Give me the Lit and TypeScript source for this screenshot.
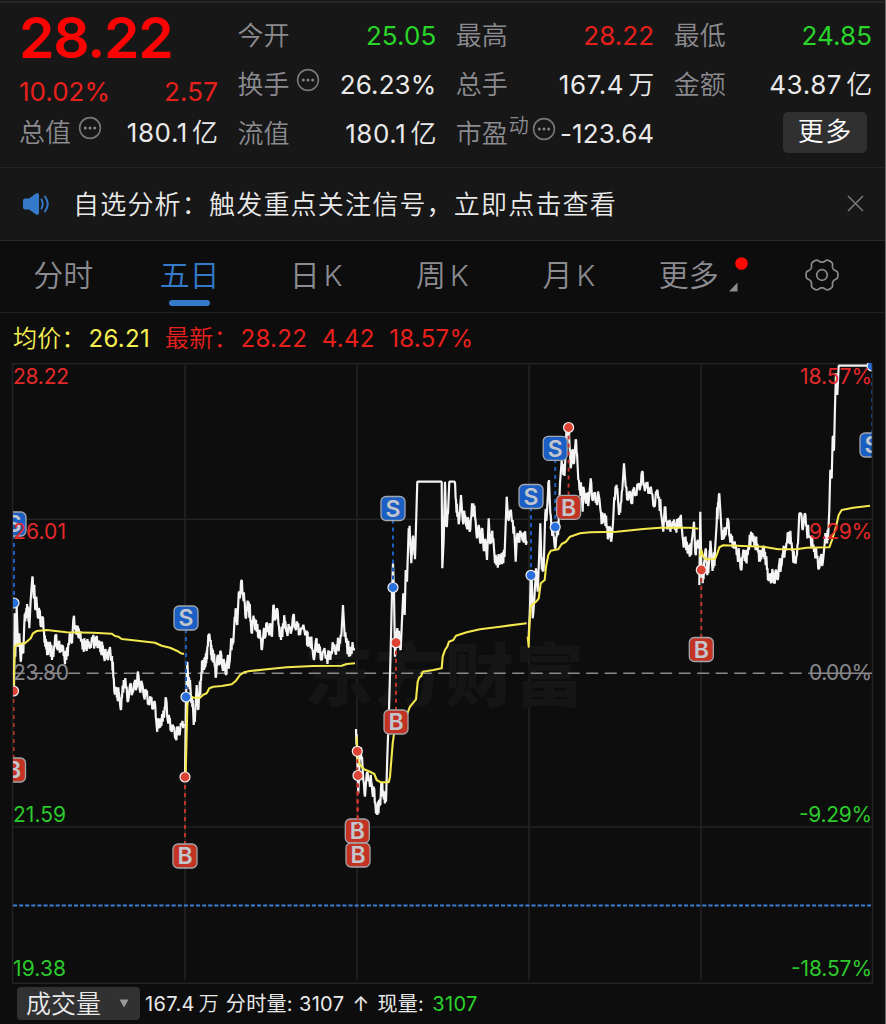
import { LitElement, html, svg, css } from "lit";
import { customElement } from "lit/decorators.js";

type Pt = [number, number];

/* Each trading session: traced in 1/3 px units from the session's own origin. */
interface Session {
  ox: number;
  oy: number;
  price: string;
  avg: string;
}

const SESSIONS: Session[] = [
  {
    ox: 0,
    oy: 500,
    price:
      "42,572 44,340 46,470 50,320 54,440 58,400 62,485 66,430 70,460 73,370 77,335 80,345 84,320 88,385 92,300 97,232 100,260 104,290 106,330 109,290 113,350 118,330 123,380 128,350 132,395 136,440 140,425 144,465 150,425 156,480 162,440 167,405 172,445 176,430 181,450 187,440 193,465 199,480 205,430 211,405 216,430 220,360 226,375 232,405 236,385 243,425 250,440 254,430 258,440 264,430 270,440 278,415 284,435 289,412 294,440 297,425 303,455 307,435 312,470 318,460 323,475 327,455 336,468 340,530 344,580 348,565 352,590 356,575 362,628 366,595 371,540 378,560 384,605 390,555 397,580 404,545 409,565 414,515 419,570 426,550 432,590 438,575 446,610 452,595 459,625 464,605 469,665 476,685 482,655 488,665 494,620 498,595 503,660 508,655 513,690 520,680 527,715 533,685 536,700 545,675 552,672",
    avg: "41,560 44,440 55,432 75,430 92,415 99,400 110,393 140,390 200,397 280,398 335,401 345,408 355,410 365,417 400,421 465,428 485,437 510,443 530,452 545,461 552,461",
  },
  {
    ox: 180,
    oy: 560,
    price:
      "15,650 18,410 22,305 26,380 30,360 34,430 38,420 41,495 46,450 50,375 54,450 58,410 62,360 65,340 68,300 72,330 75,290 79,310 82,260 86,225 92,240 95,300 99,270 104,320 108,350 112,290 118,310 122,275 127,320 133,310 138,345 142,300 148,310 152,265 156,240 160,250 164,170 168,160 172,195 176,100 180,110 184,62 189,100 193,120 197,175 201,150 206,125 211,180 215,220 219,180 223,175 230,215 236,210 241,235 246,268 251,210 255,230 260,190 266,215 272,200 276,230 280,135 285,180 291,145 297,200 303,240 309,190 314,182 320,215 328,205 334,215 340,165 345,200 353,195 358,220 365,208 380,212 384,260 390,230 396,265 402,300 408,240 413,270 418,260 424,300 430,275 440,285 447,298 453,275 460,255 466,275 472,262 478,245 484,230 489,135 494,230 500,235 507,290 512,260 520,268 525,268",
    avg: "17,640 22,440 25,405 40,413 60,413 70,404 80,400 88,385 100,380 125,378 155,373 168,362 180,345 192,337 210,333 260,328 320,322 400,318 485,317 500,312 525,310",
  },
  {
    ox: 340,
    oy: 460,
    price:
      "48,807 51,870 55,1000 60,870 66,890 70,960 75,1010 80,940 88,960 94,965 98,1005 101,985 106,1030 112,1065 117,1020 121,1035 124,965 128,1010 133,1000 138,1025 142,890 147,750 152,570 156,400 159,310 162,400 165,590 170,520 175,515 178,545 182,570 186,480 190,400 194,465 197,330 201,365 206,205 210,230 214,310 218,235 222,240 225,298 228,200 232,65 305,65 307,325 311,240 315,65 319,200 324,160 328,65 344,65 348,120 352,170 358,180 363,105 368,180 374,165 380,200 385,180 389,215 394,170 400,130 405,170 411,235 416,195 421,250 427,205 431,270 436,240 441,300 446,175 450,250 455,225 460,235 465,310 471,290 478,315 484,280 490,310 495,250 500,110 505,180 510,155 518,180 524,240 527,305 531,225 536,240 542,220 550,240 553,225 560,243",
    avg: "50,830 53,900 58,912 72,928 90,935 103,942 110,960 122,967 146,967 150,950 158,850 163,815 180,800 195,785 204,755 210,740 218,730 228,718 233,665 238,652 244,648 248,635 280,630 305,625 308,590 315,570 322,560 327,545 340,540 348,527 380,517 420,508 480,500 560,490",
  },
  {
    ox: 510,
    oy: 400,
    price:
      "56,710 60,620 62,530 66,560 68,655 73,600 78,505 83,575 87,480 91,370 94,470 98,515 102,470 106,340 110,350 114,280 117,240 121,340 125,380 130,400 135,445 140,410 146,360 150,250 155,180 160,225 165,200 169,100 174,85 178,120 182,205 187,150 192,190 197,118 201,160 205,240 210,270 214,265 218,335 220,260 226,300 231,290 236,305 242,235 247,300 253,280 259,305 266,285 273,340 278,370 284,340 290,385 295,410 299,380 304,425 309,370 313,290 318,270 322,265 327,345 332,310 337,270 342,190 347,260 353,300 359,275 365,310 370,270 377,280 384,258 391,262 396,215 402,255 410,265 417,262 425,280 432,320 440,275 447,290 453,340 460,395 464,320 470,365 477,385 483,370 490,378 497,370 503,385 510,350 514,375 519,420 525,435 530,425 539,470 545,425 552,365 556,460 561,430 568,435",
    avg: "53,710 56,740 58,680 62,620 70,612 80,603 86,595 92,550 104,540 108,500 115,465 122,452 145,448 155,432 168,425 180,410 210,400 240,397 320,395 400,387 450,383 540,383 565,386",
  },
  {
    ox: 690,
    oy: 350,
    price:
      "28,705 31,485 34,640 38,700 42,640 47,595 50,640 55,670 59,600 62,580 66,640 70,655 75,600 80,520 84,460 88,430 92,500 96,570 100,540 104,560 109,530 114,510 119,560 124,570 130,580 136,590 142,610 148,620 153,660 158,620 163,600 167,635 171,605 177,600 183,545 189,575 195,570 200,590 206,600 210,635 215,600 220,610 225,605 231,660 235,685 240,680 244,690 248,665 253,700 258,660 263,690 268,640 273,650 279,610 285,600 291,580 297,545 303,580 308,600 313,640 319,620 324,580 328,490 333,490 338,540 344,490 350,530 356,560 362,560 368,590 374,600 380,620 387,655 392,620 398,640 404,580 410,550 414,570 418,480 421,360 425,385 428,260 432,300 435,170 438,70 442,135 446,47 538,47",
    avg: "30,620 34,600 40,620 48,628 75,627 82,610 88,592 100,586 160,588 220,590 265,598 320,598 350,593 418,592 426,570 438,530 446,495 455,480 490,473 540,467",
  },
];

const parse = (s: Session, src: string): Pt[] =>
  src.split(" ").map((p) => {
    const [x, y] = p.split(",").map(Number);
    return [s.ox + x / 3, s.oy + y / 3] as Pt;
  });

const join = (pts: Pt[]) => pts.map(([x, y]) => `${x.toFixed(1)},${y.toFixed(1)}`).join(" ");

const ticks = (pts: Pt[]): Pt[] => {
  const out: Pt[] = [];
  pts.forEach((p, i) => {
    const prev = pts[i - 1];
    if (prev && prev[1] !== p[1] && Math.abs(prev[1] - p[1]) < 22) {
      const k = (i % 2 ? 1 : -1) * (3.6 + ((i * 7) % 5) * 0.8);
      out.push([prev[0] + (p[0] - prev[0]) * 0.35, (prev[1] + p[1]) / 2 + k]);
      out.push([prev[0] + (p[0] - prev[0]) * 0.7, (prev[1] + p[1]) / 2 - k]);
    }
    out.push(p);
  });
  return out;
};

interface Mark {
  k: "S" | "B";
  x: number;
  dot: number;
  tag: number;
}

const MARKS: Mark[] = [
  { k: "S", x: 14, dot: 603, tag: 524 },
  { k: "B", x: 13.5, dot: 691, tag: 770 },
  { k: "S", x: 186, dot: 697, tag: 618 },
  { k: "B", x: 185, dot: 777, tag: 856 },
  { k: "B", x: 357.3, dot: 751.3, tag: 831 },
  { k: "B", x: 358, dot: 775.5, tag: 855 },
  { k: "S", x: 393, dot: 587.5, tag: 508.5 },
  { k: "B", x: 396, dot: 642.7, tag: 722 },
  { k: "S", x: 531, dot: 575.3, tag: 496.5 },
  { k: "S", x: 555.2, dot: 527, tag: 448.3 },
  { k: "B", x: 568.6, dot: 427.5, tag: 507.3 },
  { k: "B", x: 701.3, dot: 570, tag: 649.5 },
  { k: "S", x: 872, dot: 366, tag: 445 },
];

const more = svg`<circle cx="12" cy="12" r="10.4" fill="none" stroke="#77777a" stroke-width="1.6"/>
  <g fill="#85858a"><circle cx="7.3" cy="12" r="1.5"/><circle cx="12" cy="12" r="1.5"/><circle cx="16.7" cy="12" r="1.5"/></g>`;

const gearPath = (() => {
  const pts: string[] = [];
  for (let i = 0; i <= 144; i++) {
    const a = (i / 144) * Math.PI * 2;
    const c = Math.cos(6 * a) + 0.25;
    const r = 14.3 + 1.7 * Math.tanh(c * 1.7);
    pts.push(`${(17 + r * Math.cos(a)).toFixed(2)} ${(17 + r * Math.sin(a)).toFixed(2)}`);
  }
  return `M${pts.join("L")}Z`;
})();

@customElement("app-root")
export class AppRoot extends LitElement {
  static styles = css`
    :host {
      display: block;
      box-sizing: border-box;
      width: 886px;
      height: 1024px;
      overflow: hidden;
      background: #0d0d0d;
      border-right: 1px solid #6a6a6a;
      font-family: Inter, "Noto Sans CJK SC", sans-serif;
      color: #e9e9e9;
      white-space: nowrap;
    }
    svg { display: block; flex: none; }
    .quote {
      box-sizing: border-box;
      height: 168px;
      padding: 11px 12.5px 0 19px;
      border-bottom: 1px solid #242426;
      background: linear-gradient(#1a1a1b 0 1px, #262628 1px 3px, #171717 3px);
      display: grid;
      grid-template-columns: 199px 199px 198.5px 198.5px;
      column-gap: 19.4px;
    }
    .col { display: grid; grid-template-rows: 49px 49px 49px; }
    .first { grid-template-rows: 56px 49px 34px; }
    .cell {
      display: flex;
      align-items: center;
      justify-content: space-between;
      font-size: 26px;
      line-height: 48px;
    }
    .label { color: #8b8b90; display: flex; font-weight: 350; }
    .label svg { margin: 7px 0 0 7px; }
    .val { letter-spacing: 0.1px; }
    .val:has(.han) { letter-spacing: 0.6px; }
    .han { font-weight: 350; margin-left: 4px; letter-spacing: 0; }
    .pe .label svg { margin-left: 3px; }
    .up { color: #e8201c; }
    .down { color: #2ad52a; }
    .price {
      color: #fb0504;
      font-size: 57px;
      font-weight: 560;
      line-height: 54px;
      letter-spacing: -1.3px;
    }
    .sup { font-size: 20px; line-height: 32px; margin-left: 1px; }
    .btn {
      box-sizing: border-box;
      width: 84px;
      height: 41px;
      margin: -2px 5px 0 auto;
      border-radius: 5px;
      background: #303031;
      color: #fff;
      font-weight: 350;
      line-height: 40px;
      text-align: center;
      letter-spacing: 1.5px;
    }
    .notice {
      box-sizing: border-box;
      height: 73px;
      padding: 0 21px 1px 22px;
      border-bottom: 1px solid #29292a;
      background: #171717;
      display: flex;
      align-items: center;
      font-size: 26px;
      letter-spacing: 1.2px;
    }
    .notice span { flex: 1; margin: -3px 0 0 23px; font-weight: 350; }
    .tabs {
      box-sizing: border-box;
      height: 72px;
      border-bottom: 1px solid #202022;
      display: flex;
      font-size: 30px;
      line-height: 69px;
      color: #8b8b90;
    }
    .tab {
      flex: 1;
      display: flex;
      justify-content: center;
      font-weight: 350;
      position: relative;
    }
    .tab b { font-weight: 350; margin-left: 4px; font-size: 29px; }
    .on { color: #347ac9; }
    .on::after {
      content: "";
      position: absolute;
      left: 43px;
      bottom: 6px;
      width: 41px;
      height: 6px;
      border-radius: 3px;
      background: #347ac9;
    }
    .trend { padding-left: 8px; margin-right: -8px; }
    .flag { margin: 14px 0 0 9px; }
    .tab .gear { margin-top: 17px; }
    .info {
      height: 50px;
      padding-left: 13px;
      display: flex;
      align-items: center;
      font-size: 24px;
      line-height: 51px;
      letter-spacing: 0.3px;
    }
    .info .k { width: 75.5px; font-weight: 350; }
    .info .k2 { margin-left: 15px; }
    .info .n { margin-left: 14.5px; }
    .avg { color: #f7ee52; }
    .chart text { font-family: Inter, sans-serif; font-size: 21px; }
    .chart .tag { font-family: Inter, "Liberation Sans", sans-serif; font-weight: 600; font-size: 23px; fill: #c3c6cc; }
    .chart .mark { font-family: "Noto Sans CJK SC", sans-serif; font-weight: 900; font-size: 69px; fill: #151515; }
    .volume {
      box-sizing: border-box;
      height: 40px;
      padding: 3px 0 0 17px;
      display: flex;
      font-size: 20px;
      line-height: 34px;
      letter-spacing: 0.35px;
    }
    .pick {
      box-sizing: border-box;
      width: 123px;
      height: 33px;
      padding: 0 11px 0 9px;
      border-radius: 4px;
      background: #313132;
      display: flex;
      align-items: center;
      justify-content: space-between;
      font-size: 25px;
      font-weight: 350;
      letter-spacing: 0;
      margin-right: 5px;
    }
    .volume span { margin-right: 8px; }
    .volume .han { margin: 0 -1px 0 4px; }
  `;

  private chart() {
    return svg`
      <clipPath id="plot"><rect x="13" y="363" width="858.6" height="621"/></clipPath>
      <g stroke="#232325" stroke-width="1.4" fill="none">
        <path d="M12.5 364V983M872.5 364V983M12 363.7H873M12 983.3H873M13 519.3H872M13 827H872"/>
        <path d="M185 365V980M357 365V980M529 365V980M701 365V980" stroke-width="1.6"/>
      </g>
      <text class="mark" x="304" y="701" textLength="280">东方财富</text>
      <path d="M12.7 673.3H810" stroke="#8a8a8e" stroke-width="1.4" stroke-dasharray="12 6.5"/>
      <path d="M810 673.3H872" stroke="#8a8a8e" stroke-width="1.4"/>
      <path d="M13 905.6H871" stroke="#3b7fd4" stroke-width="2" stroke-dasharray="4.1 2"/>
      <g clip-path="url(#plot)">
        ${SESSIONS.map(
          (s) => svg`
          <polyline points=${join(ticks(parse(s, s.price)))} fill="none" stroke="#f4f4f4" stroke-width="2.2" stroke-linejoin="bevel"/>
          <polyline points=${join(parse(s, s.avg))} fill="none" stroke="#f3e84e" stroke-width="2.1" stroke-linejoin="round"/>`,
        )}
        ${MARKS.map((m) => {
          const sell = m.k === "S";
          const c = sell ? "#1b5fc4" : "#c33324";
          return svg`
            <path d=${`M${m.x} ${m.dot}V${m.tag}`} stroke=${c} stroke-width="2" stroke-dasharray="4 4"/>
            <rect x=${m.x - 12} y=${m.tag - 12} width="24" height="24" rx="5" fill=${c} stroke="#a3a6ab" stroke-width="1.3"/>
            <text class="tag" x=${m.x} y=${m.tag + 8.3} text-anchor="middle">${m.k}</text>
            <circle cx=${m.x} cy=${m.dot} r="5" fill=${sell ? "#2a70dc" : "#dc4335"} stroke="#f2f2f2" stroke-width="1.2"/>`;
        })}
      </g>
      <g fill="#e3292a">
        <text x="13" y="384" textLength="56">28.22</text>
        <text x="13" y="538.500" textLength="53">26.01</text>
        <text x="872" y="384" text-anchor="end" textLength="72">18.57%</text>
        <text x="872" y="538.500" text-anchor="end" textLength="63">9.29%</text>
      </g>
      <g fill="#88888c">
        <text x="13" y="680" textLength="56">23.80</text>
        <text x="872" y="680" text-anchor="end" textLength="63">0.00%</text>
      </g>
      <g fill="#2cc92c">
        <text x="13" y="821.500" textLength="53">21.59</text>
        <text x="13" y="975.500" textLength="53">19.38</text>
        <text x="872" y="821.500" text-anchor="end" textLength="73">-9.29%</text>
        <text x="872" y="975.500" text-anchor="end" textLength="81">-18.57%</text>
      </g>`;
  }

  render() {
    const dots = html`<svg width="24" height="24" viewBox="0 0 24 24">${more}</svg>`;
    return html`
      <div class="quote">
        <div class="col first">
          <div class="price">28.22</div>
          <div class="cell up"><span>10.02%</span><span class="val">2.57</span></div>
          <div class="cell"><span class="label l1">总值${dots}</span><span class="val">180.1<span class="han">亿</span></span></div>
        </div>
        <div class="col">
          <div class="cell"><span class="label">今开</span><span class="val down">25.05</span></div>
          <div class="cell"><span class="label">换手${dots}</span><span class="val">26.23%</span></div>
          <div class="cell"><span class="label">流值</span><span class="val">180.1<span class="han">亿</span></span></div>
        </div>
        <div class="col">
          <div class="cell"><span class="label">最高</span><span class="val up">28.22</span></div>
          <div class="cell"><span class="label">总手</span><span class="val">167.4<span class="han">万</span></span></div>
          <div class="cell pe"><span class="label">市盈<span class="sup">动</span>${dots}</span><span class="val">-123.64</span></div>
        </div>
        <div class="col">
          <div class="cell"><span class="label">最低</span><span class="val down">24.85</span></div>
          <div class="cell"><span class="label">金额</span><span class="val">43.87<span class="han">亿</span></span></div>
          <div class="cell"><span class="btn">更多</span></div>
        </div>
      </div>

      <div class="notice">
        <svg width="28" height="24" viewBox="0 0 28 24">
          <path d="M1 8.5Q1 6.5 3 6.5H7L14 1.4Q17 .2 17 3V21Q17 23.600 14 22.400L7 17.500H3Q1 17.500 1 15.500Z" fill="#347ac9"/>
          <path d="M19.500 7.500Q22 12 19.500 16.500M23 4.500Q28.500 12 23 19.500" fill="none" stroke="#347ac9" stroke-width="2" stroke-linecap="round"/>
        </svg>
        <span>自选分析：触发重点关注信号，立即点击查看</span>
        <svg width="17" height="17" viewBox="0 0 17 17"><path d="M1 1L16 16M16 1L1 16" stroke="#77777a" stroke-width="1.6"/></svg>
      </div>

      <div class="tabs">
        <div class="tab">分时</div>
        <div class="tab on">五日</div>
        <div class="tab">日<b>K</b></div>
        <div class="tab">周<b>K</b></div>
        <div class="tab">月<b>K</b></div>
        <div class="tab trend">更多<svg class="flag" width="20" height="38" viewBox="0 0 20 38">
            <circle cx="13.500" cy="8.500" r="6.300" fill="#fd0a06"/><path d="M9.500 27.500V36.500H1Z" fill="#8b8b90"/></svg></div>
        <div class="tab"><svg class="gear" width="34" height="34" viewBox="0 0 34 34">
            <path d=${gearPath} fill="none" stroke="#8b8b90" stroke-width="1.700"/>
            <circle cx="17" cy="17" r="5.300" fill="none" stroke="#8b8b90" stroke-width="1.700"/></svg></div>
      </div>

      <div class="info">
        <span class="k avg">均价：</span><span class="avg">26.21</span>
        <span class="k k2 up">最新：</span><span class="up">28.22</span>
        <span class="n up">4.42</span><span class="n up">18.57%</span>
      </div>

      <svg class="chart" width="885" height="621" viewBox="0 363 885 621">${this.chart()}</svg>

      <div class="volume">
        <div class="pick">成交量<svg width="10" height="9" viewBox="0 0 10 9"><path d="M.5 .5H9.500L5 8.500Z" fill="#99999c"/></svg></div>
        <span>167.4<span class="han">万</span></span><span>分时量: 3107</span><span>↑</span><span>现量:</span><span class="down">3107</span>
      </div>
    `;
  }
}
